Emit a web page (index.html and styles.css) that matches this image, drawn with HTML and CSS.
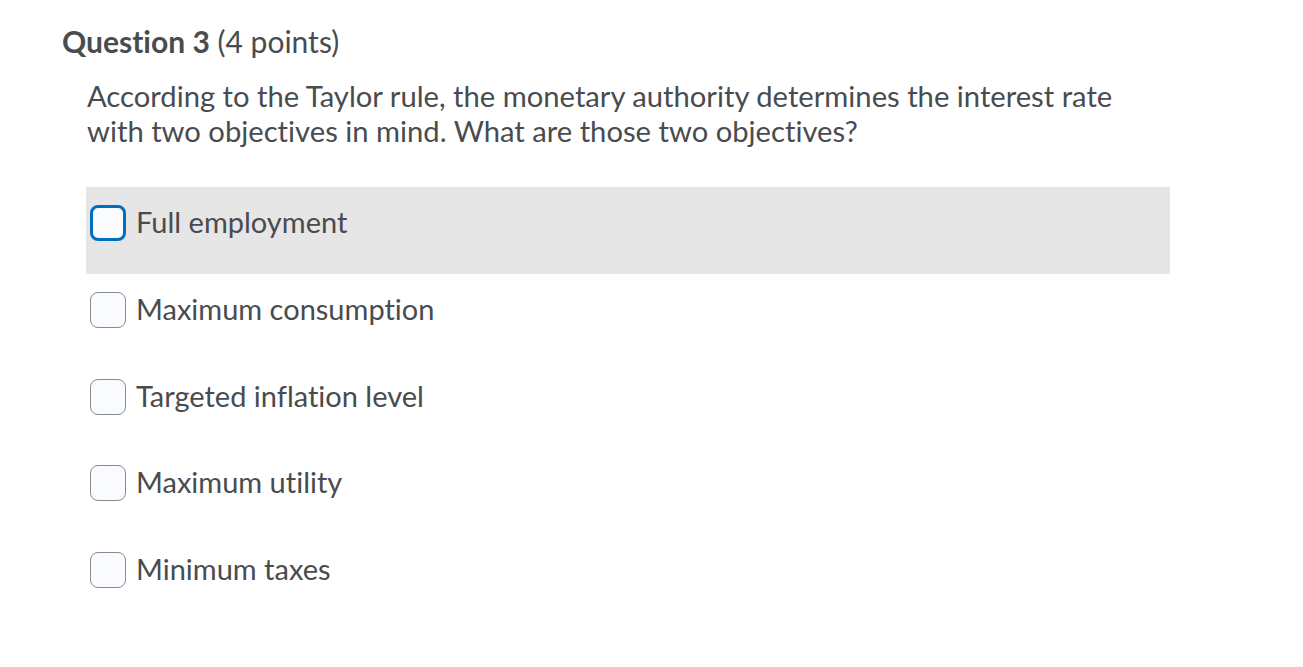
FILE: index.html
```html
<!DOCTYPE html>
<html>
<head>
<meta charset="utf-8">
<link rel="stylesheet" href="styles.css">
</head>
<body>
<div class="question">
  <h2 class="q-title"><strong>Question 3</strong> (4 points)</h2>
  <div class="q-body">
    <p class="q-text">According to the Taylor rule, the monetary authority determines the interest rate with two objectives in mind. What are those two objectives?</p>
    <div class="options">
      <label class="option hover"><span class="box focus"></span><span class="opt-text">Full employment</span></label>
      <label class="option"><span class="box"></span><span class="opt-text">Maximum consumption</span></label>
      <label class="option"><span class="box"></span><span class="opt-text">Targeted inflation level</span></label>
      <label class="option"><span class="box"></span><span class="opt-text">Maximum utility</span></label>
      <label class="option"><span class="box"></span><span class="opt-text">Minimum taxes</span></label>
    </div>
  </div>
</div>
</body>
</html>
```
FILE: styles.css
```css
html, body { margin: 0; padding: 0; background: #fff; }
body { font-family: Lato, "Open Sans", sans-serif; color: #494c4e; font-variant-ligatures: none; }
.question { padding: 23px 0 0 62px; }
.q-title { margin: 0; font-size: 30px; font-weight: 400; line-height: 36px; color: #494c4e; }
.q-title strong { font-weight: 700; }
.q-body { padding-left: 25px; }
.q-text { margin: 19px 0 0; font-size: 29.2px; line-height: 35px; width: 1060px; }
.options { margin-top: 39px; width: 1084px; margin-left: -1px; }
.option { display: flex; align-items: flex-start; height: 86.75px; padding: 18px 0 0 4px; box-sizing: border-box; }
.option.hover { background: #e6e6e6; }
.box { width: 36px; height: 36px; box-sizing: border-box; border: 1px solid #868c8f; border-radius: 8px; background: #f9fbff; flex: none; }
.box.focus { border: 3px solid #006fbf; }
.opt-text { margin-left: 10px; font-size: 29px; line-height: 34px; }
```
